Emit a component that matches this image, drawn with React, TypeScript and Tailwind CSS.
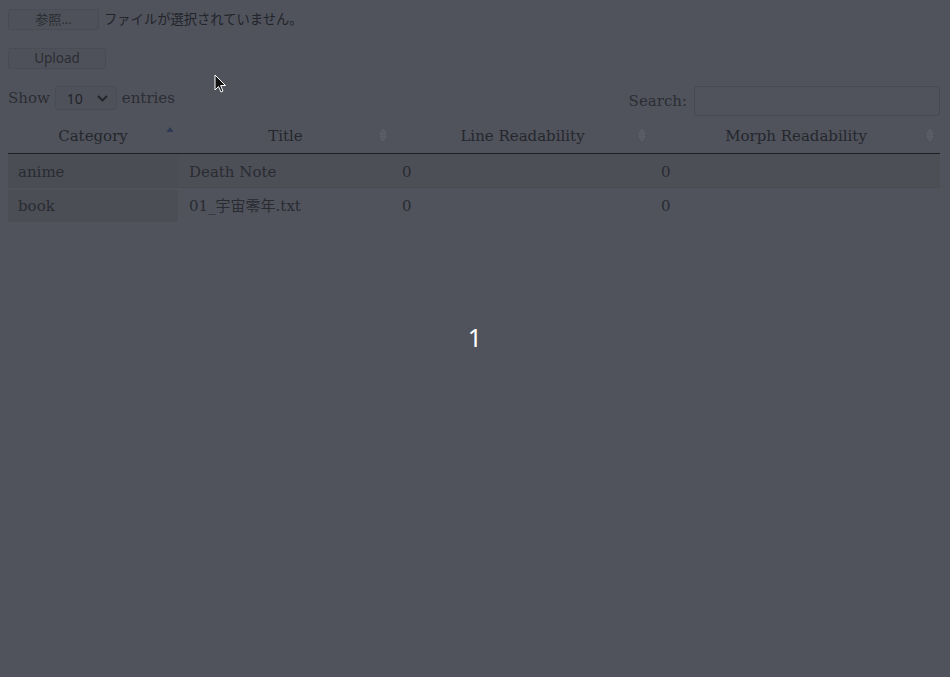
import React from "react";

const serif = { fontFamily: '"DejaVu Serif", "Noto Sans CJK JP", serif' };
const sans = { fontFamily: '"Noto Sans", "Noto Sans CJK JP", sans-serif' };

const rows = [
  { category: "anime", title: "Death Note", line: 0, morph: 0 },
  { category: "book", title: "01_宇宙零年.txt", line: 0, morph: 0 },
];

function SortIcon({ active }: { active?: boolean }) {
  if (active) {
    return (
      <svg width="8" height="10" viewBox="0 0 8 10" className="absolute right-[4px] top-[4px]">
        <path d="M4 1 L7.5 6 H0.5 Z" fill="#2c3a55" />
      </svg>
    );
  }
  return (
    <svg width="8" height="14" viewBox="0 0 8 14" className="absolute right-[6px] top-[6px]">
      <path d="M4 1 L7 6 H1 Z" fill="#565961" stroke="#5f626a" strokeWidth="1" />
      <path d="M4 13 L7 8 H1 Z" fill="#565961" stroke="#5f626a" strokeWidth="1" />
    </svg>
  );
}

export default function App() {
  const cols = [
    { label: "Category", w: "w-[170px]", active: true },
    { label: "Title", w: "w-[215px]" },
    { label: "Line Readability", w: "w-[259px]" },
    { label: "Morph Readability", w: "flex-1" },
  ];

  return (
    <div className="relative min-h-[677px] w-[950px] bg-[#50535c] text-[#25272c]">
      <div className="px-2 pt-[9px]">
        <div className="flex items-center gap-[5px]" style={sans}>
          <button className="h-[21px] w-[91px] rounded-[3px] border border-dotted border-[#44474f] bg-[#4e5159] text-[13px] leading-none text-[#2b2d33]">
            参照...
          </button>
          <span className="text-[13.3px] text-[#22242a]">ファイルが選択されていません。</span>
        </div>

        <div className="mt-[15px]" style={sans}>
          <button className="h-[21px] w-[98px] rounded-[3px] border border-dotted border-[#44474f] bg-[#4e5159] text-[13.5px] leading-none text-[#2b2d33]">
            Upload
          </button>
        </div>

        <div className="mt-[17px] flex w-[932px] items-start justify-between">
          <div className="flex items-center gap-[5px] text-[15px] text-[#2b2d33]" style={serif}>
            <span>Show</span>
            <div
              className="flex h-[24px] w-[62px] items-center justify-between rounded-[4px] border border-dotted border-[#44474f] bg-[#4e5159] pl-[11px] pr-[8px] text-[14px] text-[#22242a]"
              style={sans}
            >
              <span>10</span>
              <svg width="11" height="7" viewBox="0 0 11 7">
                <path d="M1 1 L5.5 5.5 L10 1" fill="none" stroke="#22242a" strokeWidth="1.8" />
              </svg>
            </div>
            <span>entries</span>
          </div>
          <div className="flex items-center gap-[7px] text-[15px] text-[#2b2d33]" style={serif}>
            <span>Search:</span>
            <div className="h-[30px] w-[246px] rounded-[3px] border border-[#464950] bg-[#50535c]" />
          </div>
        </div>

        <div className="mt-[6px] w-[932px]" style={serif}>
          <div className="flex h-[32px] border-b border-[#1f2024]">
            {cols.map((c) => (
              <div
                key={c.label}
                className={`relative ${c.w} flex items-center justify-center pb-[3px] text-[15px] text-[#25272c]`}
              >
                {c.label}
                <SortIcon active={c.active} />
              </div>
            ))}
          </div>
          {rows.map((r, i) => (
            <div
              key={r.category}
              className={`flex h-[34px] items-center pt-[2px] text-[15px] text-[#292b31] ${
                i === 0 ? "bg-[#4d4f57] border-b border-dotted border-[#45474e]" : ""
              }`}
            >
              <div className={`flex h-full w-[170px] items-center pl-[10px] ${i === 0 ? "bg-[#4b4d55]" : "bg-[#4c4e56]"}`}>
                {r.category}
              </div>
              <div className="w-[215px] pl-[11px]">{r.title}</div>
              <div className="w-[259px] pl-[9px]">{r.line}</div>
              <div className="flex-1 pl-[9px]">{r.morph}</div>
            </div>
          ))}
        </div>
      </div>

      <div className="flex justify-center pt-[103px]">
        <span className="text-[25px] leading-none text-white" style={sans}>
          1
        </span>
      </div>

      <svg width="14" height="20" viewBox="0 0 14 20" className="absolute left-[214px] top-[74px]">
        <path d="M1 1 L1 16 L4.5 12.5 L7 18 L9 17 L6.6 11.6 L11.5 11.5 Z" fill="#111" stroke="#fff" strokeWidth="1" />
      </svg>
    </div>
  );
}
